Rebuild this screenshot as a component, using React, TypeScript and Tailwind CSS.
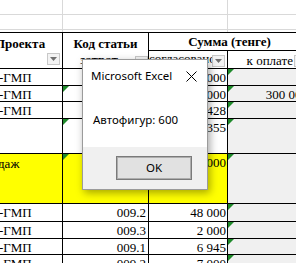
type Row = { h: string; a?: string; b?: string; c?: string; d?: string; yellow?: boolean; triB?: boolean }

// row heights include the bottom border
const ROWS: Row[] = [
  { h: 'h-[17px]', a: '-ГМП', c: '000' },
  { h: 'h-[16px]', a: '-ГМП', c: '000', d: '300 000', triB: true },
  { h: 'h-[17px]', a: '-ГМП', c: '428' },
  { h: 'h-[35px]', c: '355', triB: true },
  { h: 'h-[50px]', a: 'даж', c: '000', yellow: true, triB: true },
  { h: 'h-[18px]', a: '-ГМП', b: '009.2', c: '48 000' },
  { h: 'h-[17px]', a: '-ГМП', b: '009.3', c: '2 000' },
  { h: 'h-[16px]', a: '-ГМП', b: '009.1', c: '6 945' },
  { h: 'h-[17px]', a: '-ГМП', b: '009.2', c: '7 000' },
]

function Tri() {
  return (
    <svg className="absolute left-0 top-0" width="6" height="6" viewBox="0 0 6 6">
      <path d="M0 0H6L0 6Z" fill="#1f8a2b" />
    </svg>
  )
}

function Drop() {
  return (
    <div className="w-[13px] h-[12px] border border-[#c8c8c8] bg-[#f3f3f3] flex items-center justify-center shrink-0">
      <svg width="7" height="4" viewBox="0 0 7 4"><path d="M0 0H7L3.5 4Z" fill="#707070" /></svg>
    </div>
  )
}

export default function App() {
  return (
    <div className="relative w-[296px] h-[263px] overflow-hidden bg-white text-black font-['Liberation_Serif',serif] text-[13px] leading-[16px]">
      {/* gridlines above the table */}
      <div className="flex w-max h-[15px] border-b border-[#d9d9d9]">
        <div className="w-[63px] shrink-0 border-r border-[#d9d9d9]" />
        <div className="w-[165px] shrink-0 border-r border-[#d9d9d9]" />
        <div className="w-[82px] shrink-0" />
      </div>
      <div className="flex w-max h-[15px] border-b border-[#d9d9d9]">
        <div className="w-[63px] shrink-0 border-r border-[#d9d9d9]" />
        <div className="w-[165px] shrink-0 border-r border-[#d9d9d9]" />
        <div className="w-[82px] shrink-0" />
      </div>
      <div className="flex w-max h-[2px]">
        <div className="w-[63px] shrink-0 border-r border-[#d9d9d9]" />
        <div className="w-[165px] shrink-0 border-r border-[#d9d9d9]" />
      </div>

      {/* header */}
      <div className="flex w-max h-[37px] border-y border-black font-bold">
        <div className="w-[63px] shrink-0 border-r border-black flex flex-col justify-between">
          <span className="ml-[-5px] pt-[3px] whitespace-nowrap">Проекта</span>
          <div className="self-end mr-[2px] mb-[3px]"><Drop /></div>
        </div>
        <div className="w-[86px] shrink-0 border-r border-black flex flex-col">
          <span className="pt-[3px] text-center">Код статьи</span>
          <div className="flex items-end justify-end flex-1 pb-[3px]">
            <span className="flex-1 text-center">затрат</span>
            <Drop />
          </div>
        </div>
        <div className="w-[161px] shrink-0 flex flex-col">
          <div className="h-[18px] border-b border-black text-center pt-[1px]">Сумма (тенге)</div>
          <div className="flex flex-1 font-normal">
            <div className="w-[79px] shrink-0 border-r border-black flex items-end pb-[3px] pr-[2px]">
              <span className="flex-1 text-right pr-[2px] overflow-hidden whitespace-nowrap">согласовано</span>
              <Drop />
            </div>
            <div className="w-[82px] shrink-0 flex items-center pr-[3px]">
              <span className="flex-1 text-right pr-[1px]">к оплате</span>
              <Drop />
            </div>
          </div>
        </div>
      </div>

      {/* data rows */}
      {ROWS.map((r, i) => (
        <div key={i} className={`flex w-max border-b border-black ${r.h}`}>
          <div className={`w-[63px] shrink-0 border-r border-black pt-[1px] whitespace-nowrap ${r.yellow ? 'bg-[#ffff00]' : ''}`}>
            <span className={r.yellow ? 'ml-[-2px] inline-block pt-[1px]' : 'ml-[-1px]'}>{r.a}</span>
          </div>
          <div className={`relative w-[86px] shrink-0 border-r border-black pt-[1px] pr-[2px] text-right ${r.yellow ? 'bg-[#ffff00]' : ''}`}>
            {r.triB && <Tri />}
            {r.b}
          </div>
          <div className={`w-[79px] shrink-0 border-r border-black pt-[1px] pr-[1px] text-right ${r.yellow ? 'bg-[#ffff00]' : ''}`}>
            {r.c}
          </div>
          <div className="relative w-[82px] shrink-0 bg-[#f0f0f0] pt-[1px] pr-[2px] text-right">
            <Tri />
            {r.d}
          </div>
        </div>
      ))}

      {/* message box */}
      <div className="absolute left-[82px] top-[59px] w-[126px] h-[131px] border border-[#9b9b9b] bg-white flex flex-col shadow-[2px_3px_8px_rgba(0,0,0,0.35)] font-['Noto_Sans',sans-serif] text-[11.5px] leading-[16px]">
        <div className="h-[32px] flex items-center justify-between pl-[8px] pr-[10px]">
          <span>Microsoft Excel</span>
          <svg width="11" height="11" viewBox="0 0 11 11" stroke="#000" strokeWidth="1">
            <path d="M0.5 0.5L10.5 10.5M10.5 0.5L0.5 10.5" />
          </svg>
        </div>
        <div className="flex-1 pl-[10px] pt-[20px]">Автофигур: 600</div>
        <div className="h-[42px] bg-[#f0f0f0] flex justify-end pt-[10px] pr-[16px]">
          <button className="w-[74px] h-[22px] border border-[#adadad] bg-[#e1e1e1] outline outline-1 outline-[#7a7a7a] flex items-center justify-center">OK</button>
        </div>
      </div>
    </div>
  )
}
